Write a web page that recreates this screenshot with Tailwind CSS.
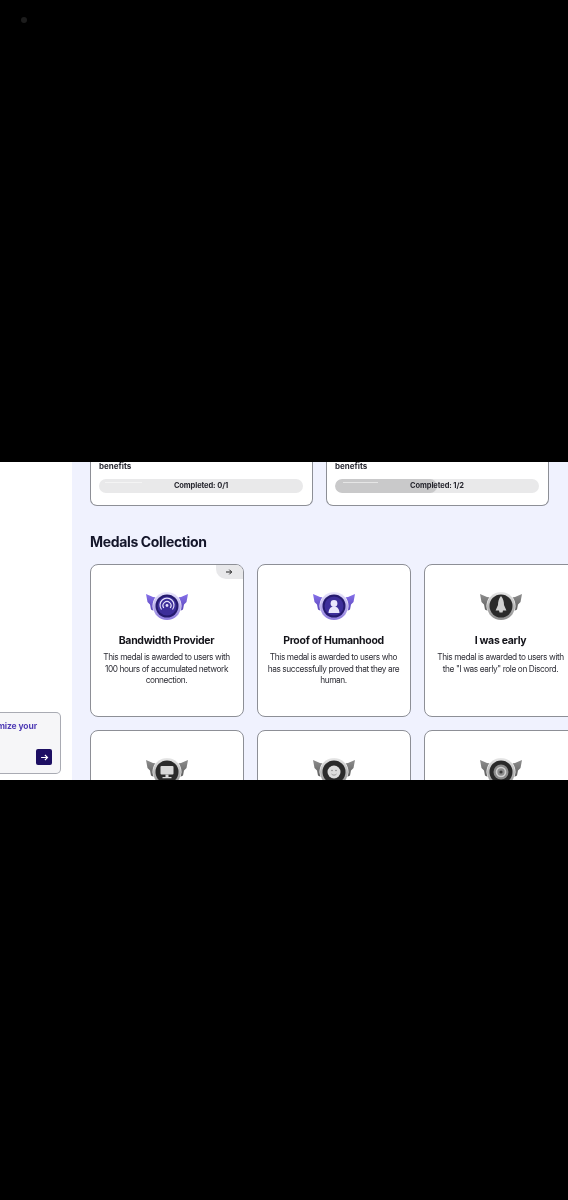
<!DOCTYPE html>
<html lang="en">
  <head>
    <meta charset="UTF-8" />
    <meta name="viewport" content="width=device-width, initial-scale=1.0" />
    <title>Medals Collection</title>
    <script src="https://cdn.jsdelivr.net/npm/@tailwindcss/browser@4"></script>
  </head>
  <body class="bg-black font-['Inter',sans-serif]">
    <!-- shared medal bodies -->
    <svg class="absolute w-0 h-0">
      <defs>
        <linearGradient id="wing-purple" x1="0" y1="0" x2="0" y2="1">
          <stop offset="0" stop-color="#8671ea" />
          <stop offset="1" stop-color="#4a36a8" />
        </linearGradient>
        <linearGradient id="wing-gray" x1="0" y1="0" x2="0" y2="1">
          <stop offset="0" stop-color="#8e8e8e" />
          <stop offset="1" stop-color="#4d4d4d" />
        </linearGradient>
        <linearGradient id="ring-purple" x1="0" y1="0" x2="0" y2="1">
          <stop offset="0" stop-color="#ece9fc" />
          <stop offset="1" stop-color="#8a78dc" />
        </linearGradient>
        <linearGradient id="ring-gray" x1="0" y1="0" x2="0" y2="1">
          <stop offset="0" stop-color="#e8e8e8" />
          <stop offset="1" stop-color="#8b8b8b" />
        </linearGradient>
        <symbol id="medal-purple" viewBox="0 0 42 32">
          <path d="M0 4 L7 7 L14 8 L14 26 L10 25 L8 21 L5 19.500 L4 14.500 L1.500 12Z" fill="url(#wing-purple)" />
          <path d="M42 4 L35 7 L28 8 L28 26 L32 25 L34 21 L37 19.500 L38 14.500 L40.500 12Z" fill="url(#wing-purple)" />
          <circle cx="21" cy="16" r="14.500" fill="#fff" />
          <circle cx="21" cy="16" r="14" fill="url(#ring-purple)" />
          <circle cx="21" cy="16" r="11.500" fill="#251a6e" />
          <circle cx="21" cy="16" r="9.500" fill="#3d2e9a" />
        </symbol>
        <symbol id="medal-gray" viewBox="0 0 42 32">
          <path d="M0 4 L7 7 L14 8 L14 26 L10 25 L8 21 L5 19.500 L4 14.500 L1.500 12Z" fill="url(#wing-gray)" />
          <path d="M42 4 L35 7 L28 8 L28 26 L32 25 L34 21 L37 19.500 L38 14.500 L40.500 12Z" fill="url(#wing-gray)" />
          <circle cx="21" cy="16" r="14.500" fill="#fff" />
          <circle cx="21" cy="16" r="14" fill="url(#ring-gray)" />
          <circle cx="21" cy="16" r="11.500" fill="#2a2a2a" />
        </symbol>
      </defs>
    </svg>

    <div class="h-[462px] pt-[17px] pl-[21px]">
      <div class="w-[6px] h-[6px] rounded-full bg-[#1c1c1c]"></div>
    </div>

    <div class="flex h-[318px] overflow-hidden blur-[0.5px]">
      <aside class="w-[72px] shrink-0 bg-white pt-[250px]">
        <div class="relative w-[61px] h-[62px] bg-[#f6f6f8] border border-l-0 border-[#a9abb3] rounded-r-[5px] overflow-hidden">
          <div class="flex justify-end whitespace-nowrap pr-[23px] pt-[8px] text-[8.5px] leading-[11px] font-bold tracking-[-0.1px] text-[#4f3bb5]">
            <span class="shrink-0">Optimize your</span>
          </div>
          <button class="absolute left-[36px] top-[36px] w-[16px] h-[16px] rounded-[2px] bg-[#1d0f63] flex items-center justify-center">
            <svg width="9" height="9" viewBox="0 0 12 12" fill="none" stroke="#fff" stroke-width="1.6">
              <path d="M1.5 6H10M6.5 2.5L10 6L6.5 9.5" />
            </svg>
          </button>
        </div>
      </aside>

      <main class="flex-1 min-w-0 bg-[#f0f2fe] pl-[17.5px] overflow-hidden">
        <div class="flex gap-[13px]">
          <div class="w-[223px] shrink-0 h-[44px] bg-white border border-t-0 border-[#8d8f96] rounded-b-[7px] px-[8.5px]">
            <p class="h-[10px] -mt-[2px] text-[8px] leading-[10px] font-bold text-[#2a2a33] pt-[1px]">benefits</p>
            <div class="relative mt-[9px] h-[14px] rounded-full bg-[#e9e9ea] flex items-center justify-center">
              <div class="absolute left-[6px] top-[3px] w-[37px] h-px bg-[#f4f4f4]"></div>
              <span class="relative text-[7.5px] font-bold tracking-[-0.1px] text-[#26262e]">Completed: 0/1</span>
            </div>
          </div>
          <div class="w-[223px] shrink-0 h-[44px] bg-white border border-t-0 border-[#8d8f96] rounded-b-[7px] px-[8.5px]">
            <p class="h-[10px] -mt-[2px] text-[8px] leading-[10px] font-bold text-[#2a2a33] pt-[1px]">benefits</p>
            <div class="relative mt-[9px] h-[14px] rounded-full bg-[#e9e9ea] flex items-center justify-center overflow-hidden">
              <div class="absolute left-0 top-0 h-full w-1/2 bg-[#c9c9ca] rounded-full"></div>
              <div class="absolute left-[8px] top-[3px] w-[35px] h-px bg-[#e6e6e6]"></div>
              <span class="relative text-[7.5px] font-bold tracking-[-0.1px] text-[#26262e]">Completed: 1/2</span>
            </div>
          </div>
        </div>

        <h2 class="mt-[26px] pl-[0.5px] text-[14px] leading-[20px] font-bold tracking-[-0.35px] text-[#14162a]">Medals Collection</h2>

        <div class="mt-[12px] grid grid-cols-[154px_154px_154px] gap-[13px]">
          <!-- Bandwidth Provider -->
          <div class="relative h-[153px] bg-white border border-[#8d8f96] rounded-[8px] px-[8px] pt-[25px] text-center overflow-hidden">
            <div class="absolute right-0 top-0 w-[27px] h-[14px] bg-[#e8e8ea] rounded-bl-[10px] flex items-center justify-center">
              <svg width="8" height="8" viewBox="0 0 12 12" fill="none" stroke="#222" stroke-width="1.5">
                <path d="M1.5 6H10M6.5 2.500L10 6L6.500 9.500" />
              </svg>
            </div>
            <svg class="mx-auto block" width="42" height="32" viewBox="0 0 42 32">
              <use href="#medal-purple" />
              <g fill="none" stroke="#e4e0fa" stroke-width="1.2">
                <path d="M15.500 19.500a7 7 0 1 1 11 0" />
                <path d="M17.800 18a4 4 0 1 1 6.400 0" />
              </g>
              <circle cx="21" cy="15.500" r="1.400" fill="#e4e0fa" />
            </svg>
            <h3 class="mt-[12px] text-[10.5px] leading-[14px] font-bold tracking-[-0.3px] text-[#14141a]">Bandwidth Provider</h3>
            <p class="mt-[4px] text-[8.3px] leading-[11.5px] tracking-[-0.4px] text-[#2e2e36]">This medal is awarded to users with 100 hours of accumulated network connection.</p>
          </div>
          <!-- Proof of Humanhood -->
          <div class="h-[153px] bg-white border border-[#8d8f96] rounded-[8px] px-[8px] pt-[25px] text-center">
            <svg class="mx-auto block" width="42" height="32" viewBox="0 0 42 32">
              <use href="#medal-purple" />
              <circle cx="21" cy="13.500" r="3.400" fill="#e9e6fb" />
              <path d="M15.500 23c.3-4.500 2.500-6.500 5.500-6.500s5.200 2 5.500 6.500Z" fill="#e9e6fb" />
            </svg>
            <h3 class="mt-[12px] text-[10.5px] leading-[14px] font-bold tracking-[-0.3px] text-[#14141a]">Proof of Humanhood</h3>
            <p class="mt-[4px] text-[8.3px] leading-[11.5px] tracking-[-0.4px] text-[#2e2e36]">This medal is awarded to users who has successfully proved that they are human.</p>
          </div>
          <!-- I was early -->
          <div class="h-[153px] bg-white border border-[#8d8f96] rounded-[8px] px-[8px] pt-[25px] text-center">
            <svg class="mx-auto block" width="42" height="32" viewBox="0 0 42 32">
              <use href="#medal-gray" />
              <path d="M21 6c2.200 2.500 3 5.500 3 9l2.400 5.500H23l-.5 2h-3l-.5-2h-3.400L18 15c0-3.500.8-6.500 3-9Z" fill="#d2d2d2" />
            </svg>
            <h3 class="mt-[12px] text-[10.5px] leading-[14px] font-bold tracking-[-0.3px] text-[#14141a]">I was early</h3>
            <p class="mt-[4px] text-[8.3px] leading-[11.5px] tracking-[-0.4px] text-[#2e2e36]">This medal is awarded to users with the "I was early" role on Discord.</p>
          </div>
          <!-- second row, cut off by the black band -->
          <div class="h-[153px] bg-white border border-[#8d8f96] rounded-[8px] pt-[25px]">
            <svg class="mx-auto block" width="42" height="32" viewBox="0 0 42 32">
              <use href="#medal-gray" />
              <rect x="14.500" y="10" width="13" height="8.500" rx="1" fill="#d8d8d8" />
              <path d="M19.500 18.500h3v2.500h-3ZM16.500 21h9v1.200h-9Z" fill="#d8d8d8" />
            </svg>
          </div>
          <div class="h-[153px] bg-white border border-[#8d8f96] rounded-[8px] pt-[25px]">
            <svg class="mx-auto block" width="42" height="32" viewBox="0 0 42 32">
              <use href="#medal-gray" />
              <circle cx="21" cy="16" r="6.500" fill="#dcdcdc" />
              <circle cx="19" cy="14.500" r="0.800" fill="#888" />
              <circle cx="23" cy="14.500" r="0.800" fill="#888" />
              <path d="M18.500 18c1.500 1.500 3.500 1.500 5 0" fill="none" stroke="#888" stroke-width="0.800" />
            </svg>
          </div>
          <div class="h-[153px] bg-white border border-[#8d8f96] rounded-[8px] pt-[25px]">
            <svg class="mx-auto block" width="42" height="32" viewBox="0 0 42 32">
              <use href="#medal-gray" />
              <circle cx="21" cy="16" r="7.500" fill="#8c8c8c" />
              <circle cx="21" cy="16" r="4.500" fill="none" stroke="#d0d0d0" stroke-width="1.600" />
              <circle cx="21" cy="16" r="1.600" fill="#3a3a3a" />
            </svg>
          </div>
        </div>
      </main>
    </div>

    <div class="h-[420px]"></div>
  </body>
</html>
